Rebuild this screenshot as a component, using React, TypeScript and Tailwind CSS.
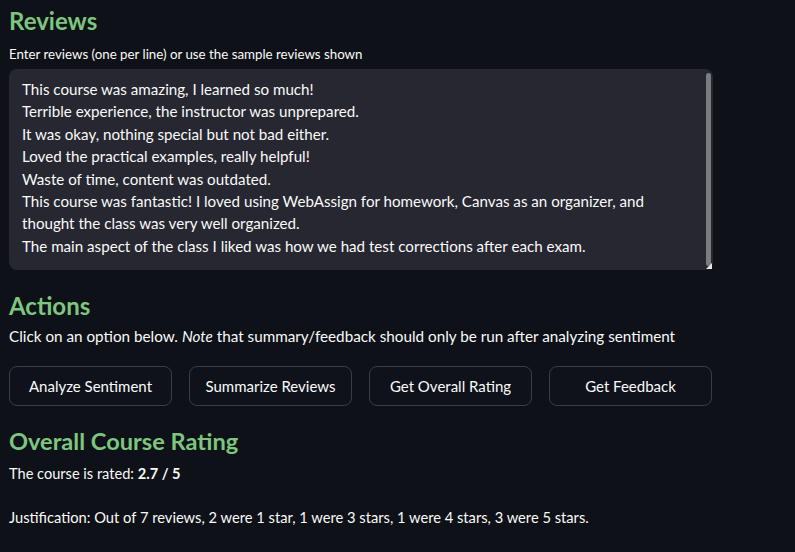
import React from "react";

const reviews = [
  "This course was amazing, I learned so much!",
  "Terrible experience, the instructor was unprepared.",
  "It was okay, nothing special but not bad either.",
  "Loved the practical examples, really helpful!",
  "Waste of time, content was outdated.",
  "This course was fantastic! I loved using WebAssign for homework, Canvas as an organizer, and",
  "thought the class was very well organized.",
  "The main aspect of the class I liked was how we had test corrections after each exam.",
];

const actions = ["Analyze Sentiment", "Summarize Reviews", "Get Overall Rating", "Get Feedback"];

export default function App() {
  return (
    <div
      className="min-h-[552px] w-[795px] bg-[#0e1117] text-[#fafafa] pl-[9px] pt-[6px]"
      style={{ fontFamily: "Lato, 'Open Sans', sans-serif" }}
    >
      <div className="w-[704px]">
        {/* Reviews */}
        <h2 className="text-[24px] font-bold leading-[30px] text-[#7dc67f]">Reviews</h2>
        <p className="mt-[10px] text-[13.3px] leading-[16px]">
          Enter reviews (one per line) or use the sample reviews shown
        </p>
        <div className="relative mt-[7px] h-[201px] rounded-lg bg-[#262730] pl-[13px] pt-[9px]">
          {reviews.map((line, i) => (
            <div key={i} className="text-[15.15px] leading-[22.4px] whitespace-nowrap">
              {line}
            </div>
          ))}
          {/* scrollbar thumb */}
          <div className="absolute right-[2px] top-[4px] h-[193px] w-[5px] rounded-full bg-[#7b7b82]" />
          {/* resize grip */}
          <svg className="absolute right-[1px] bottom-[1px]" width="6" height="6" viewBox="0 0 6 6">
            <path d="M6 0 L6 6 L0 6 Z" fill="#e6e6e6" />
          </svg>
        </div>

        {/* Actions */}
        <h2 className="mt-[21px] text-[24px] font-bold leading-[30px] text-[#7dc67f]">Actions</h2>
        <p className="mt-[4px] text-[15.25px] leading-[22px]">
          Click on an option below. <em>Note</em> that summary/feedback should only be run after analyzing sentiment
        </p>
        <div className="mt-[19px] flex gap-[17px]">
          {actions.map((a) => (
            <button
              key={a}
              className="h-[40px] w-[163px] rounded-lg border border-[#3a3d45] bg-[#0f121a] text-[15px] text-[#fafafa]"
            >
              {a}
            </button>
          ))}
        </div>

        {/* Overall rating */}
        <h2 className="mt-[20px] text-[23.6px] font-bold leading-[30px] text-[#7dc67f]">Overall Course Rating</h2>
        <p className="mt-[8px] text-[14.6px] leading-[20px]">
          The course is rated: <strong>2.7 / 5</strong>
        </p>
        <p className="mt-[23px] text-[14.7px] leading-[20px]">
          Justification: Out of 7 reviews, 2 were 1 star, 1 were 3 stars, 1 were 4 stars, 3 were 5 stars.
        </p>
      </div>
    </div>
  );
}
